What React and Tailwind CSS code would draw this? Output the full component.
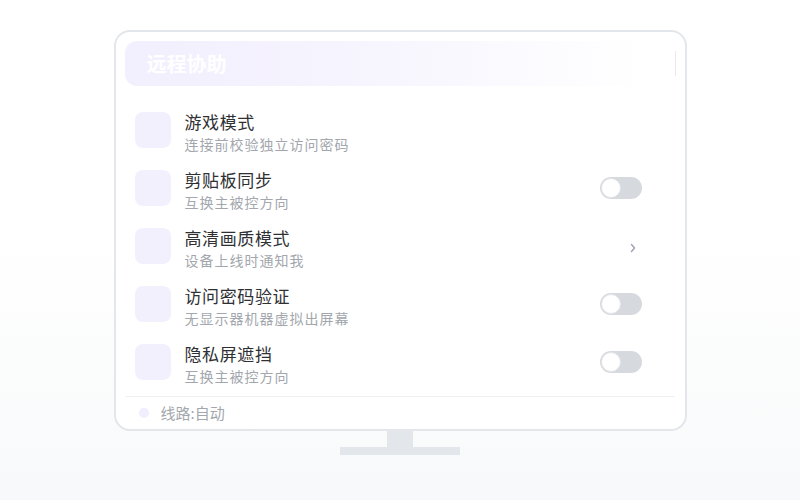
import React from "react";

const rows = [
  { title: "游戏模式", sub: "连接前校验独立访问密码", right: "none" },
  { title: "剪贴板同步", sub: "互换主被控方向", right: "toggle" },
  { title: "高清画质模式", sub: "设备上线时通知我", right: "chevron" },
  { title: "访问密码验证", sub: "无显示器机器虚拟出屏幕", right: "toggle" },
  { title: "隐私屏遮挡", sub: "互换主被控方向", right: "toggle" },
];

function Toggle() {
  return (
    <div className="w-[42px] h-[22px] rounded-full bg-[#d6d9de] flex items-center px-px">
      <div className="w-[20px] h-[20px] rounded-full bg-white border border-[#e3e5e9]" />
    </div>
  );
}

function Chevron() {
  return (
    <div className="w-[42px] flex justify-end pr-[5px] pt-[3px]">
      <svg width="8" height="12" viewBox="0 0 8 12" fill="none">
        <path d="M2.5 2.5 L5.5 6 L2.5 9.5" stroke="#9ca3af" strokeWidth="1.4" strokeLinecap="round" strokeLinejoin="round" />
      </svg>
    </div>
  );
}

export default function App() {
  return (
    <div className="w-full h-[500px] bg-[linear-gradient(to_bottom,#ffffff_0%,#ffffff_48%,#f8f9fa_100%)] font-['Noto_Sans_CJK_SC','Noto_Sans',sans-serif] flex flex-col items-center pt-[30px]">
      <div className="w-[573px] h-[401px] border-2 border-[#e3e6ea] rounded-[16px] bg-white pt-[9px] px-[9px] flex flex-col">
        <div className="h-[45px] rounded-[12px] bg-[linear-gradient(to_right,#f2effe_0%,#f6f4fe_40%,#ffffff_95%)] pl-[22px] flex items-center justify-between">
          <span className="text-white font-bold text-[20px] leading-none">远程协助</span>
          <div className="flex items-center gap-[4px]">
            <span className="text-white/80 font-bold text-[20px] leading-none">协助</span>
            <div className="w-px h-[25px] bg-[#e8eaee]" />
          </div>
        </div>
        <div className="mt-[15px] flex flex-col">
          {rows.map((r, i) => (
            <div key={i} className="h-[58px] flex items-center pl-[10px] pr-[34px]">
              <div className="w-9 h-9 rounded-[8px] bg-[#f3f0fe] shrink-0" />
              <div className="ml-[14px] mt-[6px] flex flex-col flex-1">
                <span className="text-[17px] leading-[22px] tracking-[0.6px] text-[#2f3033]">{r.title}</span>
                <span className="text-[14px] leading-[22px] tracking-[1px] text-[#a3a7ad]">{r.sub}</span>
              </div>
              {r.right === "toggle" && <Toggle />}
              {r.right === "chevron" && <Chevron />}
            </div>
          ))}
        </div>
        <div className="mt-[5px] h-px bg-[#eef0f3] mx-px" />
        <div className="h-[32px] flex items-center pl-[14px]">
          <div className="w-[10px] h-[10px] rounded-full bg-[#f1eefd]" />
          <span className="ml-[12px] text-[15px] text-[#a3a7ad]">线路:自动</span>
        </div>
      </div>
      <div className="w-[26px] h-[16px] bg-[#e3e6ea]" />
      <div className="w-[120px] h-[8px] bg-[#e3e6ea]" />
    </div>
  );
}
